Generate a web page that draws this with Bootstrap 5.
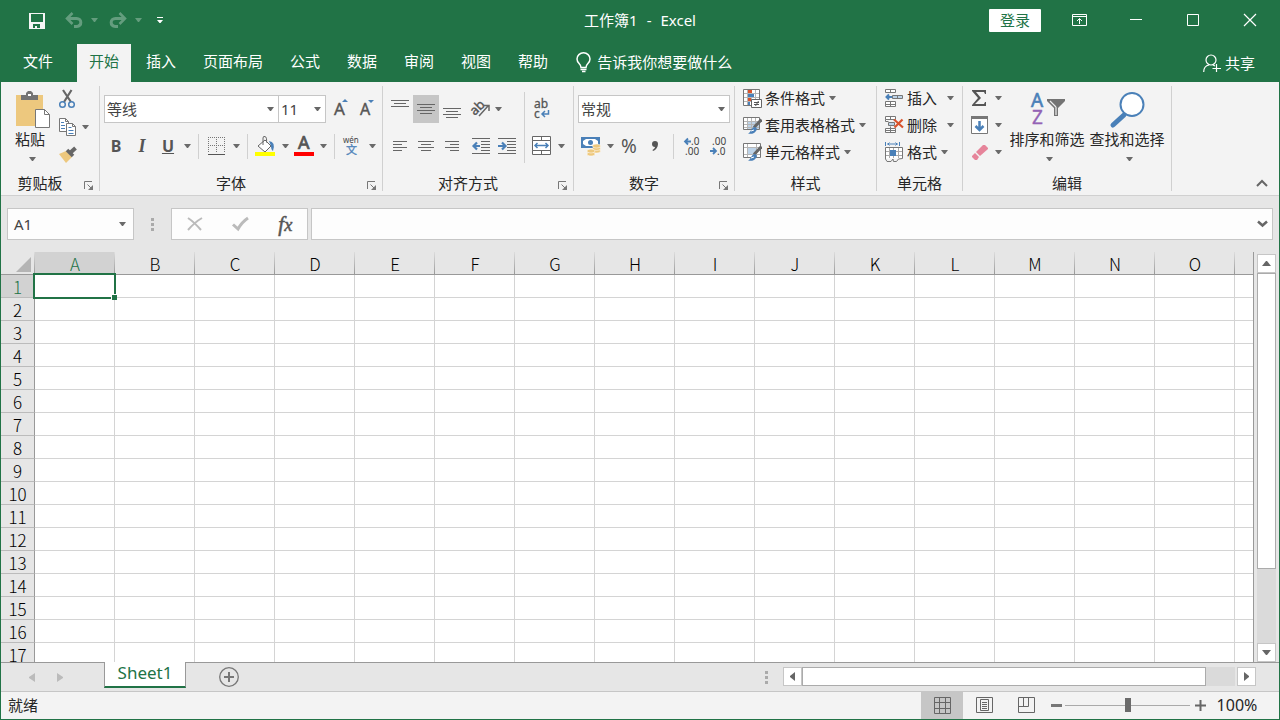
<!DOCTYPE html>
<html lang="zh-CN">
<head>
<meta charset="utf-8">
<meta name="viewport" content="width=device-width, initial-scale=1">
<title>工作簿1 - Excel</title>
<link href="https://cdn.jsdelivr.net/npm/bootstrap@5.3.0/dist/css/bootstrap.min.css" rel="stylesheet">
<style>
:root{--xl:#217346;--line:#c6c6c6;--ink:#666;--blue:#4a80b8}
body{font-family:"Noto Sans","Noto Sans CJK SC",sans-serif;font-size:15px;line-height:20px;color:#262626;background:#e6e6e6}
button{background:none;border:0;padding:0;color:inherit;display:inline-flex;align-items:center;justify-content:center}
svg{display:block;flex:none;overflow:visible}
.app{border:solid var(--xl);border-width:0 1px 1px}
.green{background:var(--xl);color:#fff}
.titlebar{height:44px;padding-bottom:4px}
.side{flex:1 1 0;min-width:0}
.win{width:57px;height:40px}
.login{width:52px;height:23px;background:#fff;color:var(--xl);margin-right:10px;border-radius:1px}
.qat-btn{width:26px;height:40px}
.qat-drop{width:18px;height:40px;margin:0 2px 0 -2px}
.dn{width:1px;box-sizing:content-box;border:solid transparent;border-width:4px 3px 0;border-top-color:#6a6a6a;flex:none}
.faded{opacity:.3}.white-dn{border-top-color:#fff}
.tabs{height:38px}
.tab{height:38px;padding:0 12px 4px;color:#fff;text-decoration:none;display:flex;align-items:center}
.tab-file{width:76px;padding-left:22px}
.tab-on{background:#f3f3f3;color:var(--xl)}
.tell{margin-left:16px;padding-bottom:2px}
.share{padding-right:24px}
.ribbon{background:#f3f3f3;border-bottom:1px solid #d0d0d0;padding:4px 0}
.grp{border-right:1px solid #d0d0d0;height:105px}
.grp-body{height:88px}
.grp-foot{height:17px;line-height:19px}
.launch{width:20px;height:17px;padding-top:6px}
.g-clip{width:99px}.g-font{width:283px}.g-align{width:191px}.g-num{width:161px}.g-style{width:142px}.g-cell{width:86px}.g-edit{width:209px}
.tools{padding:9px 0 0 4px;gap:9px}
.tools-font{padding-left:3px}
.tool{width:26px;height:28px;color:#555;flex:none}
.tool-on{background:#c6c6c6}
.drop{width:12px;height:28px;flex:none}
.vr-thin{width:1px;height:25px;margin:0 5px;background:#d0d0d0}
.vr-tall{width:1px;height:71px;margin:6px 4px 0;background:#d0d0d0}
.combo{height:28px;border:1px solid var(--line);border-radius:0;background:#fff url("data:image/svg+xml,%3Csvg xmlns='http://www.w3.org/2000/svg' width='7' height='4'%3E%3Cpath d='M0 0h7L4 4H3z' fill='%23666'/%3E%3C/svg%3E") no-repeat right 4px center;appearance:none;padding:0 2px;color:#444;line-height:20px}
.c-font{width:175px;margin-left:1px}.c-size{width:48px;margin-left:-1px;margin-right:2px}.c-num{width:152px}
.big{width:80px;padding-top:5px;height:88px;flex-direction:column;justify-content:flex-start}
.big-pic{height:38px;display:flex;align-items:center}
.big .dn{margin:8px 0 0 4px}
.paste{width:38px;margin-left:10px;white-space:nowrap}
.small3{gap:2px;margin-left:10px}
.small3 button{height:26px}
.line27{height:27px;white-space:nowrap;gap:3px;padding-bottom:3px}
.line27 .dn{margin-left:1px}
.line27 .dn-far{margin-left:7px}
.fbar{padding:12px 6px}
.fbox{height:32px;border:1px solid var(--line);background:#fdfdfd}
.namebox{width:127px}
.namebox input,.fx-in input{border:0;background:none;min-width:0;outline:0;color:#444}
.fx-btns{width:137px;margin-right:3px}
.dots{width:37px;display:flex;justify-content:center;align-items:center}
.grid-wrap{border-right:1px solid #999;margin-right:3px}
.cells{border-collapse:separate;border-spacing:0;table-layout:fixed;width:0;background:#fff}
.cells th{font-family:"Noto Sans CJK SC",sans-serif;font-weight:300;font-size:17px;text-align:center;padding:2px 0 0;line-height:20px;color:#000;background:#e6e6e6}
.cells thead th{height:23px;border-bottom:1px solid #999;background:linear-gradient(#ddd,#999) no-repeat right/1px 100%,#e6e6e6}
.cells tbody th{border-right:1px solid #999;border-bottom:1px solid #bbb;height:23px}
.cells td{border:solid #d4d4d4;border-width:0 1px 1px 0;height:23px;padding:0}
.cells .picked{color:var(--xl);background-color:#d2d2d2}
.col-num{width:34px}.col-cell{width:80px}
.active-cell{position:relative}
.active-cell::before{content:"";position:absolute;inset:-2px -2px -2px -2px;border:2px solid var(--xl)}
.active-cell::after{content:"";position:absolute;right:-3px;bottom:-3px;width:6px;height:6px;background:var(--xl);border:solid #fff;border-width:1px 0 0 1px}
.vbar{width:19px;margin:2px 3px 0 0;background:#dadada}
.sbtn{width:19px;height:19px;background:#fff;border:1px solid var(--line);flex:none}
.thumb{background:#fff;border:1px solid #ababab}
.sheetbar{height:29px;border-top:1px solid #999}
.sheet-tab{width:82px;height:26px;margin-top:-1px;background:#fff;border:solid #999;border-width:0 1px 0;border-bottom:2px solid var(--xl);color:var(--xl);font-size:17px;padding-bottom:3px;margin-left:27px}
.navb{width:28px;height:28px}
.hbar{width:473px;height:19px;margin:4px 23px 0 0}
.status{height:28px;border-top:1px solid var(--line);background:#f3f3f3;padding-bottom:1px}
.view{width:42px;height:27px}
.view-on{background:#c6c6c6}
.zoomer{appearance:none;width:125px;height:14px;background:linear-gradient(#aaa,#aaa) no-repeat center/100% 1px;margin:0 5px 0 3px}
.zoomer::-webkit-slider-thumb{appearance:none;width:6px;height:14px;background:#6b6b6b;border:0}
.pct{font-size:16px;width:65px;padding-right:3px;margin-right:8px}
</style>
</head>
<body>
<svg width="0" height="0" class="position-absolute" aria-hidden="true">
  <symbol id="launch" viewBox="0 0 10 10"><path d="M.5 8V.5H8" fill="none" stroke="#777"/><path d="M3.500 3.500l4 4" stroke="#777"/><path d="M9 4v5H4z" fill="#777"/></symbol>
  <symbol id="styled" viewBox="0 0 19 19"><path d="M18.500 3.500L11 11.500" stroke="#666" stroke-width="3"/><path d="M12 11c3 1 2 4-1 6-2 1-4 1-6 .5 3-.5 3-6.500 7-6.500z" fill="#4a80b8"/><path d="M8 15l3-1" stroke="#fff"/></symbol>
</svg>
<div class="app vh-100 d-flex flex-column overflow-hidden">

<header class="green titlebar d-flex align-items-center">
  <div class="side d-flex">
    <button class="qat-btn" style="margin:0 11px 0 23px" aria-label="保存"><svg width="16" height="16" shape-rendering="crispEdges"><path fill="#f5f5f5" fill-rule="evenodd" d="M0 0h16v16H0zM2 1v8h12V1zM4 11v4h2v-2h2v2h3v-4z" transform="translate(0 1)"/></svg></button>
    <button class="qat-btn faded" aria-label="撤消"><svg width="18" height="14"><path d="M2 5.500h9.500c5.500 0 6 7.500 0 8H9" fill="none" stroke="#fff" stroke-width="3"/><path d="M7.500 0L2 5.500l5.500 5.500" fill="none" stroke="#fff" stroke-width="2.500"/></svg></button>
    <button class="qat-drop faded" aria-label="撤消列表"><i class="dn white-dn"></i></button>
    <button class="qat-btn faded" aria-label="恢复"><svg width="18" height="14"><path d="M16 5.500H6.500c-5.500 0-6 7.500 0 8H9" fill="none" stroke="#fff" stroke-width="3"/><path d="M10.500 0L16 5.500 10.500 11" fill="none" stroke="#fff" stroke-width="2.500"/></svg></button>
    <button class="qat-drop faded me-0" aria-label="恢复列表"><i class="dn white-dn"></i></button>
    <button class="qat-btn" aria-label="自定义快速访问工具栏"><svg width="6" height="6" fill="#fff"><path d="M0 0h6v1H0zM0 3h6L3.500 6h-1z"/></svg></button>
  </div>
  <div>工作簿1<span style="margin:0 9px">-</span>Excel</div>
  <div class="side d-flex justify-content-end align-items-center">
    <button class="login">登录</button>
    <button class="win" aria-label="功能区显示选项"><svg width="15" height="12" fill="none" stroke="#fff"><path d="M.5.5h14v11H.5zM0 2.500h15M7.500 10V4.500M5 7l2.500-2.500L10 7"/></svg></button>
    <button class="win" aria-label="最小化"><svg width="13" height="12"><path d="M0 5.500h12" stroke="#fff"/></svg></button>
    <button class="win" aria-label="最大化"><svg width="13" height="12"><path d="M.5.500h11v11H.5z" fill="none" stroke="#fff"/></svg></button>
    <button class="win" aria-label="关闭"><svg width="13" height="12"><path d="M0 0l12 12M12 0L0 12" stroke="#fff" stroke-width="1.200"/></svg></button>
  </div>
</header>

<nav class="green tabs d-flex">
  <a class="tab tab-file" href="#">文件</a>
  <div class="d-flex" style="gap:3px">
    <a class="tab tab-on" href="#" aria-current="page">开始</a><a class="tab" href="#">插入</a><a class="tab" href="#">页面布局</a><a class="tab" href="#">公式</a><a class="tab" href="#">数据</a><a class="tab" href="#">审阅</a><a class="tab" href="#">视图</a><a class="tab" href="#">帮助</a>
  </div>
  <button class="tell" style="gap:5px"><svg width="16" height="21" fill="none" stroke="#fff" stroke-width="1.500"><path d="M5 15.500c0-4-4-4-4-8.500a6.500 6.200 0 0 1 13 0c0 4.500-4 4.500-4 8.500zM4.500 17.500h6M6 19.500h3.500"/></svg><span>告诉我你想要做什么</span></button>
  <button class="share ms-auto gap-1"><svg width="18" height="19" fill="none" stroke="#fff" stroke-width="1.200"><circle cx="8" cy="6" r="5"/><path d="M.7 18c0-4 2.300-6.500 5.300-7M10 11l2 1M13.500 10v8M9.500 14.500H18"/></svg><span>共享</span></button>
</nav>

<section class="ribbon d-flex" aria-label="功能区">
  <div class="grp g-clip">
    <div class="grp-body d-flex">
      <button class="big paste"><span class="big-pic"><svg width="41" height="38" viewBox="-6 0 41 38"><path d="M0 4h27v31H0z" fill="#edc87e"/><path d="M5 9V4h5V2l2-2h3l2 2v2h5v5z" fill="#737373"/><path d="M12 3h3v2h-3z" fill="#fff"/><path d="M19.500 18.500h9l5 5v13h-14z" fill="#fff" stroke="#777"/><path d="M28.500 18.500v5h5" fill="none" stroke="#777"/></svg></span><span>粘贴</span><i class="dn"></i></button>
      <div class="small3 d-flex flex-column align-items-start">
        <button aria-label="剪切"><svg width="18" height="19" fill="none"><path d="M4 0l8 12M12.500 0L5 12" stroke="#666" stroke-width="2.200"/><g stroke="#4a80b8" stroke-width="1.500"><circle cx="3.500" cy="14.500" r="2.800"/><circle cx="12.500" cy="14.500" r="2.800"/></g></svg></button>
        <button class="gap-1" aria-label="复制"><svg width="19" height="19" fill="#fff" stroke="#777"><path d="M.5.5h6l3 3v10h-9z"/><path d="M7.500 5.500h6l3 3v9h-9z"/><path d="M6.500.5v3h3M13.500 5.500v3h3" fill="none"/><path d="M2 4.500h3M2 7.500h4M2 10.500h4M9.500 9.500h3M9.500 12.500h5M9.500 15.500h5" stroke="#4a80b8"/></svg><i class="dn"></i></button>
        <button aria-label="格式刷"><svg width="19" height="18"><path d="M0 8l7-3 6 6-6 6z" fill="#edc87e"/><path d="M8 4l6 6" stroke="#666" stroke-width="3.500"/><path d="M11 7l5.500-5" stroke="#666" stroke-width="4"/></svg></button>
      </div>
    </div>
    <div class="grp-foot d-flex"><span class="flex-grow-1 text-center">剪贴板</span><button class="launch" aria-label="剪贴板设置"><svg width="10" height="10"><use href="#launch"/></svg></button></div>
  </div>

  <div class="grp g-font">
    <div class="grp-body tools tools-font d-flex flex-column">
      <div class="d-flex">
        <select class="combo c-font" aria-label="字体"><option>等线</option></select>
        <select class="combo c-size" aria-label="字号"><option>11</option></select>
        <button class="tool" aria-label="增大字号"><svg width="16" height="20"><text x="1" y="16" font-size="17" stroke="#555" stroke-width=".4" fill="#555">A</text><path d="M9 3l3-3 3 3z" fill="#4a80b8"/></svg></button>
        <button class="tool" aria-label="减小字号"><svg width="16" height="20"><text x="1" y="16" font-size="16" stroke="#555" stroke-width=".4" fill="#555">A</text><path d="M9 1h6l-3 3z" fill="#4a80b8"/></svg></button>
      </div>
      <div class="d-flex align-items-center">
        <button class="tool fs-6 fw-bold" aria-label="加粗">B</button>
        <button class="tool fw-bold" aria-label="倾斜"><i style="font:italic bold 18px 'Liberation Serif',serif">I</i></button>
        <button class="tool fs-6 fw-bold" aria-label="下划线"><u>U</u></button>
        <button class="drop" aria-label="下划线样式"><i class="dn"></i></button><span class="vr-thin"></span>
        <button class="tool" aria-label="边框"><svg width="18" height="18" shape-rendering="crispEdges" fill="none" stroke="#777"><path d="M0 .5h17M0 8.500h17M.5 0v16M8.500 0v16M16.500 0v16" stroke-dasharray="1 1"/><path d="M0 17.500h17" stroke="#555"/></svg></button>
        <button class="drop" aria-label="边框样式"><i class="dn"></i></button><span class="vr-thin"></span>
        <button class="tool" aria-label="填充颜色"><svg width="22" height="20"><path d="M3 10l7-6 6 6-6 6z" fill="#fff" stroke="#666"/><path d="M8 9V2q0-2 2-1.500t1.500 6" fill="none" stroke="#666"/><path d="M14 5q7 1 4 10-2-1-2-5z" fill="#4a80b8"/><path d="M0 16h20v4H0z" fill="#ff0"/></svg></button>
        <button class="drop" aria-label="选择填充颜色"><i class="dn"></i></button>
        <button class="tool" aria-label="字体颜色"><svg width="20" height="20"><text x="4" y="13" font-size="18" stroke="#555" stroke-width=".7" fill="#555">A</text><path d="M0 16h20v4H0z" fill="red"/></svg></button>
        <button class="drop" aria-label="选择字体颜色"><i class="dn"></i></button><span class="vr-thin"></span>
        <button class="tool" aria-label="拼音指南"><svg width="20" height="20"><text x="0" y="7" font-size="8" fill="#444">wén</text><text x="3" y="18" font-size="11" fill="#4a80b8" stroke="#4a80b8" stroke-width=".3">文</text></svg></button>
        <button class="drop" aria-label="拼音选项"><i class="dn"></i></button>
      </div>
    </div>
    <div class="grp-foot d-flex"><span class="flex-grow-1 text-center">字体</span><button class="launch" aria-label="字体设置"><svg width="10" height="10"><use href="#launch"/></svg></button></div>
  </div>

  <div class="grp g-align">
    <div class="d-flex">
    <div class="grp-body tools d-flex flex-column">
      <div class="d-flex">
        <button class="tool" aria-label="顶端对齐"><svg width="18" height="20" stroke="#666"><path d="M0 1.500h18M3 4.500h12M0 7.500h18"/></svg></button>
        <button class="tool tool-on" aria-label="垂直居中"><svg width="18" height="20" stroke="#666"><path d="M0 5.500h18M3 8.500h12M0 11.500h18M3 14.500h12"/></svg></button>
        <button class="tool" aria-label="底端对齐"><svg width="18" height="20" stroke="#666"><path d="M0 9.500h18M3 12.500h12M0 15.500h18M3 18.500h12"/></svg></button>
        <button class="tool" style="margin-left:3px" aria-label="方向"><svg width="20" height="20"><text transform="rotate(-45 8 10)" x="0" y="12" font-size="13" fill="#555" stroke="#555" stroke-width=".4">ab</text><path d="M8 17l9-10M12.500 6.500H18V12" stroke="#666" fill="none" stroke-width="1.500"/></svg></button>
        <button class="drop" style="margin-left:-2px" aria-label="方向选项"><i class="dn"></i></button>
      </div>
      <div class="d-flex">
        <button class="tool" aria-label="左对齐"><svg width="14" height="12" stroke="#666"><path d="M0 1.500h14M0 4.500h9M0 7.500h14M0 10.500h9"/></svg></button>
        <button class="tool" aria-label="居中"><svg width="16" height="12" stroke="#666"><path d="M0 1.500h16M3 4.500h10M0 7.500h16M3 10.500h10"/></svg></button>
        <button class="tool" aria-label="右对齐"><svg width="14" height="12" stroke="#666"><path d="M0 1.500h14M5 4.500h9M0 7.500h14M5 10.500h9"/></svg></button>
        <button class="tool" style="margin-left:3px" aria-label="减少缩进"><svg width="18" height="16" stroke="#666"><path d="M0 .5h18M9 3.500h9M9 6.500h9M9 9.500h9M9 12.500h9M0 15.500h18"/><path d="M8 8H2M5 4.500L1.500 8 5 11.500" fill="none" stroke="#4a80b8" stroke-width="2.200"/></svg></button>
        <button class="tool" aria-label="增加缩进"><svg width="18" height="16" stroke="#666"><path d="M0 .5h18M9 3.500h9M9 6.500h9M9 9.500h9M9 12.500h9M0 15.500h18"/><path d="M0 8h7M4 4.500L7.500 8 4 11.500" fill="none" stroke="#4a80b8" stroke-width="2.200"/></svg></button>
      </div>
    </div>
    <span class="vr-tall"></span>
    <div class="tools ps-0 d-flex flex-column">
      <button class="tool" aria-label="自动换行"><svg width="18" height="20"><text x="1" y="9" font-size="12" fill="#555" stroke="#555" stroke-width=".3">ab</text><text x="1" y="19" font-size="12" fill="#555" stroke="#555" stroke-width=".3">c</text><path d="M15.500 11v4H9M12 12l-3 3 3 3" fill="none" stroke="#4a80b8" stroke-width="1.500"/></svg></button>
      <div class="d-flex"><button class="tool" aria-label="合并后居中"><svg width="20" height="20" fill="#fff" stroke="#666"><path d="M.5.500h18v18H.5zM9.500 0v19"/><path d="M.5 4.500h18v10H.5z"/><path d="M3 9.500h13M5.500 7L3 9.500 5.500 12M13.500 7L16 9.500 13.500 12" fill="none" stroke="#4a80b8" stroke-width="1.500"/></svg></button><button class="drop" aria-label="合并选项"><i class="dn"></i></button></div>
    </div>
    </div>
    <div class="grp-foot d-flex"><span class="flex-grow-1 text-center">对齐方式</span><button class="launch" aria-label="对齐设置"><svg width="10" height="10"><use href="#launch"/></svg></button></div>
  </div>

  <div class="grp g-num">
    <div class="grp-body tools d-flex flex-column">
      <select class="combo c-num" aria-label="数字格式"><option>常规</option></select>
      <div class="d-flex align-items-center">
        <button class="tool" aria-label="会计数字格式"><svg width="20" height="20"><path d="M0 1h19v11H0z" fill="#4a80b8"/><path d="M2 5l3-2h9l3 2v3l-3 2H5L2 8z" fill="#fff"/><circle cx="9.500" cy="6.500" r="2.500" fill="#4a80b8"/><g fill="#edc87e" stroke="#fff" stroke-width=".5"><ellipse cx="15.500" cy="15" rx="4" ry="2"/><ellipse cx="15.500" cy="12.500" rx="4" ry="2"/><ellipse cx="15.500" cy="10" rx="4" ry="2"/><ellipse cx="10" cy="18" rx="4" ry="2"/><ellipse cx="10" cy="15" rx="4" ry="2"/></g></svg></button>
        <button class="drop" aria-label="会计格式列表"><i class="dn"></i></button>
        <button class="tool" style="font-size:19px" aria-label="百分比样式">%</button>
        <button class="tool" aria-label="千位分隔样式"><svg width="8" height="12"><path d="M4 1a3 3 0 0 1 3 3c0 3-2 6-5 7l-.5-1C3 9 4 8 4 7a3 3 0 0 1 0-6z" fill="#555"/></svg></button><span class="vr-thin"></span>
        <button class="tool" aria-label="增加小数位数"><svg width="17" height="18"><text x="7" y="8" font-size="10" fill="#444">.0</text><text x="1" y="18" font-size="10" fill="#444">.00</text><path d="M7 4.500H2M4 1.500l-3 3 3 3" fill="none" stroke="#4a80b8" stroke-width="1.800"/></svg></button>
        <button class="tool" aria-label="减少小数位数"><svg width="17" height="18"><text x="2" y="8" font-size="10" fill="#444">.00</text><text x="7" y="18" font-size="10" fill="#444">.0</text><path d="M0 14h6M3 11l3 3-3 3" fill="none" stroke="#4a80b8" stroke-width="1.800"/></svg></button>
      </div>
    </div>
    <div class="grp-foot d-flex"><span class="flex-grow-1 text-center">数字</span><button class="launch" aria-label="数字设置"><svg width="10" height="10"><use href="#launch"/></svg></button></div>
  </div>

  <div class="grp g-style">
    <div class="grp-body ps-2 d-flex flex-column align-items-start">
      <button class="line27"><svg width="19" height="18" fill="#fff"><path d="M.5.5h16v16H.5z"/><path d="M1 4.500h15M1 8.500h15M1 12.500h15M4.500 1v15M8.500 1v15M12.500 1v15" stroke="#b5b5b5"/><path d="M.5.500h16v16H.5z" fill="none" stroke="#777"/><path d="M5 1h4v3H5zM5 9h3v3H5z" fill="#d9532c"/><path d="M5 5h6v3H5zM5 13h2v3H5z" fill="#4a80b8"/><path d="M8.500 10.500h10v8h-10z" stroke="#666"/><path d="M11 13.500h5M11 15.500h5M15.500 12l-3 5" stroke="#555"/></svg><span>条件格式</span><i class="dn"></i></button>
      <button class="line27"><svg width="19" height="18"><path d="M.5 1.500h16v12H.5z" fill="#fff"/><path d="M5 5h11v8H5z" fill="#bdd3e8"/><path d="M1 5.500h15M1 8.500h15M1 11.500h15M4.500 2v11M8.500 2v11M12.500 2v11" stroke="#b5b5b5"/><path d="M.5 1.500h16v12H.5z" fill="none" stroke="#777"/><use href="#styled" width="19" height="19"/></svg><span>套用表格格式</span><i class="dn"></i></button>
      <button class="line27"><svg width="19" height="18"><path d="M.5.5h17v14H.5z" fill="#fff"/><path d="M5 4h9v7H5z" fill="#bdd3e8"/><path d="M1 4.500h16M1 11.500h16M4.500 1v13M13.500 1v13" stroke="#b5b5b5"/><path d="M.5.500h17v14H.5z" fill="none" stroke="#777"/><use href="#styled" width="19" height="19"/></svg><span>单元格样式</span><i class="dn"></i></button>
    </div>
    <div class="grp-foot text-center">样式</div>
  </div>

  <div class="grp g-cell">
    <div class="grp-body ps-2 d-flex flex-column align-items-start">
      <button class="line27"><svg width="19" height="18" fill="#fff" stroke="#777"><path d="M.5.5h10v3H.5zM5.500.5v3M.5 12.500h10v5H.5zM5.500 12.500v5M.5 15.500h10"/><path d="M7.500 6.500h10v3h-10zM12.500 6.500v3" fill="#bdd3e8"/><path d="M7 8H2M4 5.500L1.500 8 4 10.500" fill="none" stroke="#4a80b8" stroke-width="2"/></svg><span>插入</span><i class="dn dn-far"></i></button>
      <button class="line27"><svg width="19" height="18" fill="#fff" stroke="#777"><path d="M.5.5h10v3H.5zM5.500.5v3M.5 12.500h10v4H.5zM5.500 10.500v6M.5 14.500h10M.5 3.500v2h3"/><path d="M3.500 6.500h6v3h-6z" fill="#bdd3e8"/><path d="M9 3.500l9 8M17.500 3.500l-8 8" stroke="#d9532c" stroke-width="2.200"/></svg><span>删除</span><i class="dn dn-far"></i></button>
      <button class="line27"><svg width="19" height="20" fill="#fff"><path d="M.5 5.500h17v11H.5z"/><path d="M1 9.500h16M1 13.500h16M4.500 6v10M8.500 6v10M13.500 6v10" stroke="#aaa"/><path d="M.5 5.500h17v11l-4 .5-2 2.500h-3L8 17l-2 2.500H2L.5 17z" fill="none" stroke="#777"/><path d="M5 8h6v6H5z" fill="#4a80b8"/><path d="M.5 0v4M14.500 0v4M2 2h11M4.500.5L3 2l1.500 1.500M10.500.5L12 2l-1.500 1.500" fill="none" stroke="#4a80b8"/></svg><span>格式</span><i class="dn"></i></button>
    </div>
    <div class="grp-foot text-center">单元格</div>
  </div>

  <div class="grp g-edit">
    <div class="grp-body ps-2 d-flex">
      <div class="d-flex flex-column align-items-start" style="width:36px">
        <button class="line27" aria-label="自动求和"><svg width="17" height="18"><path d="M1 1h14v4h-1l-1-2H5l5 6-6 6h9l1-2h1v4H1v-1l6-7-6-7z" fill="#555"/></svg><i class="dn dn-far ms-1"></i></button>
        <button class="line27" aria-label="填充"><svg width="17" height="18"><path d="M.5.500h16v17H.5z" fill="#fff" stroke="#777"/><path d="M0 0h17v3H0z" fill="#777"/><path d="M8.500 5v9M4.500 10l4 4 4-4" fill="none" stroke="#4a80b8" stroke-width="2.500"/></svg><i class="dn dn-far ms-1"></i></button>
        <button class="line27" aria-label="清除"><svg width="17" height="17"><path d="M5 8l7-7h2l3 3v1l-8 7z" fill="#e6849a"/><path d="M4 9l4 4-2 3H4l-3-3v-1z" fill="#e6849a"/></svg><i class="dn dn-far ms-1"></i></button>
      </div>
      <button class="big"><span class="big-pic"><svg width="36" height="34"><text x="2" y="14" font-size="19" fill="#4a80b8" stroke="#4a80b8" stroke-width=".6">A</text><text x="3" y="31" font-size="19" fill="#9463b5" stroke="#9463b5" stroke-width=".3">Z</text><path d="M18 6h18v2l-7 7v8h-4v-8l-7-7z" fill="#737373"/><path d="M27 14v8M21 8l6 6" stroke="#eee" stroke-width="1.200"/></svg></span><span>排序和筛选</span><i class="dn"></i></button>
      <button class="big"><span class="big-pic"><svg width="34" height="36"><path d="M14 23L3 33" stroke="#4a80b8" stroke-width="5" stroke-linecap="round"/><circle cx="22" cy="12.500" r="11.500" fill="#fff" stroke="#4a80b8" stroke-width="2"/></svg></span><span>查找和选择</span><i class="dn"></i></button>
    </div>
    <div class="grp-foot text-center">编辑</div>
  </div>
  <button class="ms-auto align-self-end px-2 me-1" aria-label="折叠功能区" style="height:16px"><svg width="10" height="7"><path d="M0 6l5-5 5 5" fill="none" stroke="#666" stroke-width="2"/></svg></button>
</section>

<div class="fbar d-flex">
  <div class="fbox namebox d-flex"><input class="flex-grow-1 w-100 px-0 ps-1" value="A1" aria-label="名称框" style="text-indent:2px"><button class="px-2" style="margin-right:-1px" aria-label="名称列表"><i class="dn"></i></button></div>
  <div class="dots"><svg width="3" height="13" fill="#aaa"><path d="M0 0h3v3H0zM0 5h3v3H0zM0 10h3v3H0z"/></svg></div>
  <div class="fbox fx-btns d-flex">
    <button class="flex-fill" aria-label="取消"><svg width="16" height="14"><path d="M1 1q6 4 13 12M15 1Q8 5 1 13" stroke="#bbb" stroke-width="2" fill="none"/></svg></button>
    <button class="flex-fill" aria-label="输入"><svg width="17" height="14"><path d="M1 7.500L6 12Q10 5 16 1" stroke="#bbb" stroke-width="3" fill="none"/></svg></button>
    <button class="flex-fill" aria-label="插入函数"><i style="font:italic 21px 'Liberation Serif',serif;color:#555;-webkit-text-stroke:.5px #555">f<small>x</small></i></button>
  </div>
  <div class="fbox fx-in d-flex flex-grow-1"><input class="flex-grow-1" aria-label="编辑栏"><button class="px-1" aria-label="展开编辑栏"><svg width="11" height="8"><path d="M1 1.500L5.500 5.500 10 1.500" fill="none" stroke="#666" stroke-width="2.500"/></svg></button></div>
</div>

<main class="d-flex flex-grow-1" style="min-height:0">
  <div class="grid-wrap flex-grow-1 overflow-hidden" style="min-width:0">
    <table class="cells" aria-label="Sheet1"><thead><tr id="cols"></tr></thead><tbody id="rows"></tbody></table>
  </div>
  <div class="vbar d-flex flex-column">
    <button class="sbtn" aria-label="向上滚动"><svg width="9" height="5"><path d="M0 5l4-5h1l4 5z" fill="#666"/></svg></button>
    <div class="thumb" style="flex:296"></div><div style="flex:75"></div>
    <button class="sbtn" aria-label="向下滚动"><svg width="9" height="5"><path d="M0 0h9L5 5H4z" fill="#666"/></svg></button>
  </div>
</main>

<div class="sheetbar d-flex align-items-start">
  <div class="d-flex" style="padding-left:17px;width:76px">
    <button class="navb" aria-label="上一个工作表"><svg width="6" height="9"><path d="M6 0v9L0 5V4z" fill="#bbb"/></svg></button>
    <button class="navb" aria-label="下一个工作表"><svg width="6" height="9"><path d="M0 0v9l6-4V4z" fill="#bbb"/></svg></button>
  </div>
  <button class="sheet-tab">Sheet1</button>
  <button class="navb" style="margin-left:29px" aria-label="新工作表"><svg width="20" height="20" fill="none" stroke="#777"><circle cx="10" cy="10" r="9.300" stroke-width="1.300"/><path d="M10 5v10M5 10h10" stroke-width="2"/></svg></button>
  <div class="dots ms-auto" style="width:33px;height:28px"><svg width="3" height="13" fill="#aaa"><path d="M0 0h3v3H0zM0 5h3v3H0zM0 10h3v3H0z"/></svg></div>
  <div class="hbar d-flex">
    <button class="sbtn" aria-label="向左滚动"><svg width="5" height="9"><path d="M5 0v9L0 5V4z" fill="#666"/></svg></button>
    <div class="thumb" style="flex:404"></div><div style="flex:29;background:#dadada;margin-right:2px"></div>
    <button class="sbtn" aria-label="向右滚动"><svg width="5" height="9"><path d="M0 0v9l5-4V4z" fill="#666"/></svg></button>
  </div>
</div>

<footer class="status d-flex align-items-center">
  <span style="padding-left:7px">就绪</span>
  <button class="view view-on ms-auto" aria-label="普通"><svg width="17" height="17" fill="none" stroke="#666"><path d="M.5.5h16v16H.5zM.5 5.500h16M.5 11.500h16M5.500.5v16M11.500.5v16"/></svg></button>
  <button class="view" aria-label="页面布局"><svg width="17" height="16" fill="none" stroke="#666"><path d="M.5.5h16v15H.5zM4.500 2.500h8v11h-8zM6 5.500h5M6 7.500h5M6 9.500h5M6 11.500h5"/></svg></button>
  <button class="view" aria-label="分页预览"><svg width="17" height="16" fill="none" stroke="#666"><path d="M.5.5h16v15H.5zM5.500.5v9M10.500.5v9M.5 9.500h10"/></svg></button>
  <button style="margin-left:4px" aria-label="缩小"><svg width="11" height="11"><path d="M0 5.500h11" stroke="#777" stroke-width="3"/></svg></button>
  <input type="range" class="zoomer" min="0" max="100" value="50" aria-label="缩放">
  <button aria-label="放大"><svg width="11" height="11"><path d="M0 5.500h11M5.500 0v11" stroke="#666" stroke-width="2"/></svg></button>
  <button class="pct">100%</button>
</footer>
</div>

<script>
// Fills the visible sheet area with 80px columns and 23px rows; A1 is the active cell.
const letters = [...'ABCDEFGHIJKLMNOPQRSTUVWXYZ'];
const wrap = document.querySelector('.grid-wrap');
function drawSheet() {
  const space = (wrap.clientWidth - 34) / 80;
  const nCols = Math.min(26, Math.ceil(space));
  const nRows = Math.ceil((wrap.clientHeight - 23) / 23);
  const shown = letters.slice(0, nCols);
  document.getElementById('cols').innerHTML =
    '<th class="col-num"><svg class="ms-auto me-1" width="15" height="15"><path d="M0 15L15 0v15z" fill="#b4b4b4"/></svg></th>' +
    shown.map((l, i) => `<th scope="col" class="col-cell${i ? '' : ' picked'}">${i + 1 > space ? '' : l}</th>`).join('');
  document.getElementById('rows').innerHTML = Array.from({length: nRows}, (_, r) =>
    `<tr><th scope="row"${r ? '' : ' class="picked"'}>${r + 1}</th>` +
    shown.map((_, c) => `<td${r + c ? '' : ' class="active-cell"'}></td>`).join('') + '</tr>').join('');
}
drawSheet();
addEventListener('resize', drawSheet);
</script>
<script src="https://cdn.jsdelivr.net/npm/bootstrap@5.3.0/dist/js/bootstrap.bundle.min.js"></script>
</body>
</html>
